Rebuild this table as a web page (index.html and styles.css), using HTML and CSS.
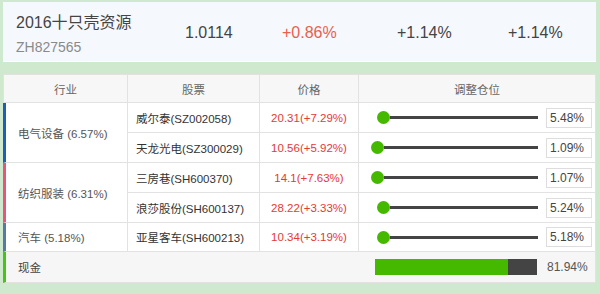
FILE: index.html
```html
<!DOCTYPE html>
<html lang="zh">
<head>
<meta charset="utf-8">
<link rel="stylesheet" href="styles.css">
</head>
<body>
<div class="summary">
  <div class="name">
    <div class="title">2016十只壳资源</div>
    <div class="code">ZH827565</div>
  </div>
  <div class="num">1.0114</div>
  <div class="num up">+0.86%</div>
  <div class="num">+1.14%</div>
  <div class="num">+1.14%</div>
</div>

<div class="table">
  <div class="th c1">行业</div>
  <div class="th">股票</div>
  <div class="th">价格</div>
  <div class="th">调整仓位</div>

  <div class="ind blue span2">电气设备 (6.57%)</div>
  <div class="stock">威尔泰(SZ002058)</div>
  <div class="price">20.31(+7.29%)</div>
  <div class="adj"><div class="slider"><span class="pad" style="width:6px"></span><span class="dot"></span><span class="track"></span></div><div class="box">5.48%</div></div>

  <div class="stock">天龙光电(SZ300029)</div>
  <div class="price">10.56(+5.92%)</div>
  <div class="adj"><div class="slider"><span class="pad" style="width:0px"></span><span class="dot"></span><span class="track"></span></div><div class="box">1.09%</div></div>

  <div class="ind pink span2">纺织服装 (6.31%)</div>
  <div class="stock">三房巷(SH600370)</div>
  <div class="price">14.1(+7.63%)</div>
  <div class="adj"><div class="slider"><span class="pad" style="width:0px"></span><span class="dot"></span><span class="track"></span></div><div class="box">1.07%</div></div>

  <div class="stock">浪莎股份(SH600137)</div>
  <div class="price">28.22(+3.33%)</div>
  <div class="adj"><div class="slider"><span class="pad" style="width:6px"></span><span class="dot"></span><span class="track"></span></div><div class="box">5.24%</div></div>

  <div class="ind slate">汽车 (5.18%)</div>
  <div class="stock">亚星客车(SH600213)</div>
  <div class="price">10.34(+3.19%)</div>
  <div class="adj"><div class="slider"><span class="pad" style="width:6px"></span><span class="dot"></span><span class="track"></span></div><div class="box">5.18%</div></div>

  <div class="cash-label">现金</div>
  <div class="cash">
    <div class="cashbar"><span class="fill" style="width:81.94%"></span></div>
    <div class="cashval">81.94%</div>
  </div>
</div>
</body>
</html>
```

FILE: styles.css
```css
* { box-sizing: border-box; }
html, body { margin: 0; padding: 0; }
body {
  width: 600px;
  height: 294px;
  background: #cfe9cf;
  font-family: "Liberation Sans", Arial, "Noto Sans CJK SC", sans-serif;
  color: #444;
  overflow: hidden;
  padding-top: 2px;
}

.summary {
  margin: 0 4px 0 3px;
  height: 60px;
  background: #f5f9fe;
  border-bottom: 1px solid #ffffff;
  display: grid;
  grid-template-columns: 169px 97px 115px 111px 1fr;
  align-items: center;
  padding-left: 13px;
}
.name {
  align-self: start;
  padding-top: 11px;
  display: flex;
  flex-direction: column;
  gap: 6px;
}
.title { font-size: 16px; color: #444; line-height: 20px; }
.code { font-size: 14px; color: #8a8a8a; line-height: 16px; }
.num { font-size: 16px; color: #444; padding-top: 2px; }
.up { color: #e8604d; }

.table {
  margin: 12px 4px 0 3px;
  background: #fff;
  display: grid;
  grid-template-columns: 125px 132px 99px 237px;
  grid-template-rows: 28px 30px 30px 30px 30px 29px 31px;
  font-size: 11.5px;
  border-top: 1px solid #e2e2e2;
}
.th {
  background: #f7f7f7;
  color: #666;
  display: flex;
  align-items: center;
  justify-content: center;
  border-right: 1px solid #e2e2e2;
  border-bottom: 1px solid #e2e2e2;
}
.th.c1 { border-left: 1px solid #e2e2e2; }

.ind {
  display: flex;
  align-items: center;
  padding-left: 12px;
  color: #555;
  border-right: 1px solid #e2e2e2;
  border-bottom: 1px solid #e2e2e2;
  border-left: 3px solid #1c5fb5;
}
.span2 { grid-row: span 2; }
.blue { border-left-color: #1c5fb5; }
.pink { border-left-color: #e6567a; }
.slate { border-left-color: #5878a8; }

.stock {
  display: flex;
  align-items: center;
  padding-left: 8px;
  color: #333;
  border-right: 1px solid #e2e2e2;
  border-bottom: 1px solid #e2e2e2;
}
.price {
  display: flex;
  align-items: center;
  justify-content: center;
  color: #e53935;
  border-right: 1px solid #e2e2e2;
  border-bottom: 1px solid #e2e2e2;
}
.adj {
  display: flex;
  align-items: center;
  padding-left: 12px;
  border-bottom: 1px solid #e2e2e2;
  border-right: 1px solid #e2e2e2;
}
.slider {
  width: 167px;
  display: flex;
  align-items: center;
}
.pad { flex: none; }
.dot {
  flex: none;
  width: 13px;
  height: 13px;
  border-radius: 50%;
  background: #45b800;
}
.track {
  flex: 1;
  height: 3px;
  background: #444;
}
.box {
  margin-left: 8px;
  width: 46px;
  height: 20px;
  border: 1px solid #ddd;
  background: #fff;
  font-size: 12px;
  color: #444;
  padding-left: 3px;
  line-height: 18px;
}

.cash-label {
  background: #f6f6f6;
  border-left: 3px solid #49c21a;
  display: flex;
  align-items: center;
  padding-left: 12px;
  color: #444;
  border-bottom: 1px solid #e2e2e2;
}
.cash {
  grid-column: 2 / span 3;
  background: #f6f6f6;
  display: flex;
  align-items: center;
  padding-left: 247px;
  border-bottom: 1px solid #e2e2e2;
  border-right: 1px solid #e2e2e2;
}
.cashbar {
  width: 162px;
  height: 16px;
  background: #444;
  display: flex;
}
.fill { background: #45b800; height: 100%; }
.cashval {
  margin-left: 10px;
  font-size: 12px;
  color: #555;
}
```
